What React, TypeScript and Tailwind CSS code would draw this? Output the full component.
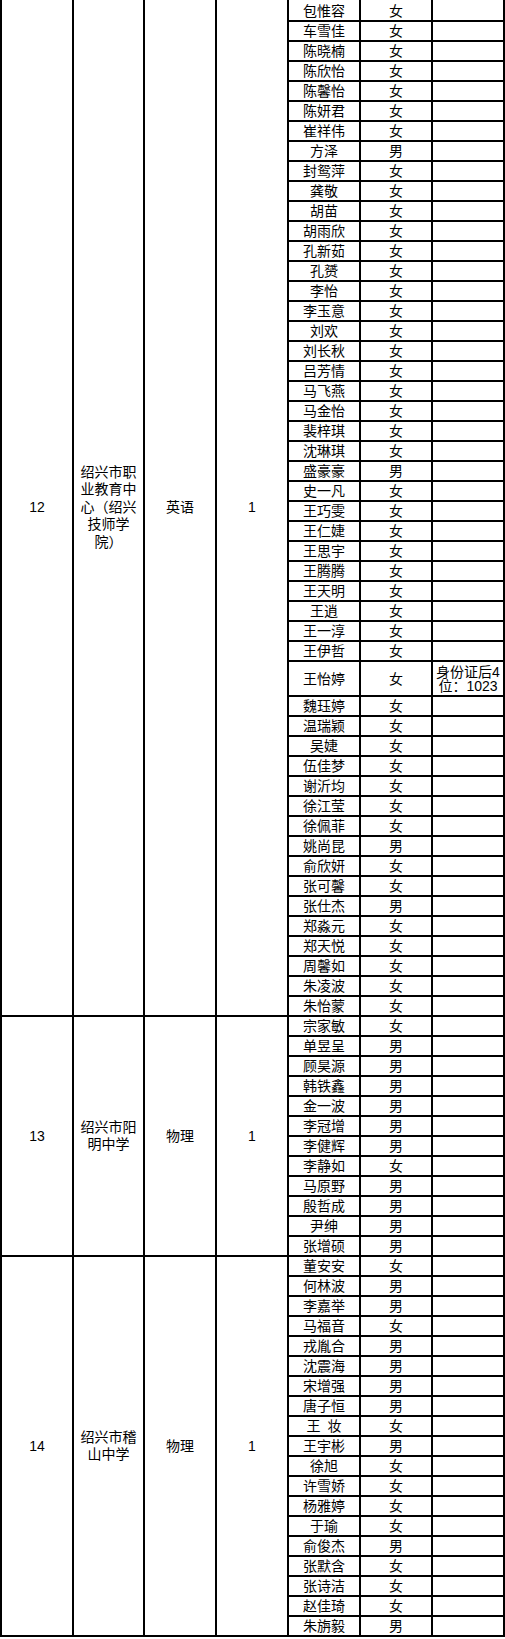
import React from "react";

type Person = {
  name: string;
  gender: "男" | "女";
  note?: string;
};

type Group = {
  no: string;
  school: string;
  subject: string;
  count: string;
  people: Person[];
};

const f = (name: string): Person => ({ name, gender: "女" });
const m = (name: string): Person => ({ name, gender: "男" });

const groups: Group[] = [
  {
    no: "12",
    school: "绍兴市职业教育中心（绍兴技师学院）",
    subject: "英语",
    count: "1",
    people: [
      f("包惟容"),
      f("车雪佳"),
      f("陈晓楠"),
      f("陈欣怡"),
      f("陈馨怡"),
      f("陈妍君"),
      f("崔祥伟"),
      m("方泽"),
      f("封鸳萍"),
      f("龚敬"),
      f("胡苗"),
      f("胡雨欣"),
      f("孔新茹"),
      f("孔赟"),
      f("李怡"),
      f("李玉意"),
      f("刘欢"),
      f("刘长秋"),
      f("吕芳情"),
      f("马飞燕"),
      f("马金怡"),
      f("裴梓琪"),
      f("沈琳琪"),
      m("盛豪豪"),
      f("史一凡"),
      f("王巧雯"),
      f("王仁婕"),
      f("王思宇"),
      f("王腾腾"),
      f("王天明"),
      f("王逍"),
      f("王一淳"),
      f("王伊哲"),
      { name: "王怡婷", gender: "女", note: "身份证后4位：1023" },
      f("魏珏婷"),
      f("温瑞颖"),
      f("吴婕"),
      f("伍佳梦"),
      f("谢沂均"),
      f("徐江莹"),
      f("徐佩菲"),
      m("姚尚昆"),
      f("俞欣妍"),
      f("张可馨"),
      m("张仕杰"),
      f("郑淼元"),
      f("郑天悦"),
      f("周馨如"),
      f("朱凌波"),
      f("朱怡蒙"),
    ],
  },
  {
    no: "13",
    school: "绍兴市阳明中学",
    subject: "物理",
    count: "1",
    people: [
      f("宗家敏"),
      m("单昱呈"),
      m("顾昊源"),
      m("韩铁鑫"),
      m("金一波"),
      m("李冠增"),
      m("李健辉"),
      f("李静如"),
      m("马原野"),
      m("殷哲成"),
      m("尹绅"),
      m("张增硕"),
    ],
  },
  {
    no: "14",
    school: "绍兴市稽山中学",
    subject: "物理",
    count: "1",
    people: [
      f("董安安"),
      m("何林波"),
      m("李嘉举"),
      f("马福音"),
      m("戎胤合"),
      m("沈震海"),
      m("宋增强"),
      m("唐子恒"),
      f("王\u2002妆"),
      m("王宇彬"),
      f("徐旭"),
      f("许雪娇"),
      f("杨雅婷"),
      f("于瑜"),
      m("俞俊杰"),
      f("张默含"),
      f("张诗洁"),
      f("赵佳琦"),
      m("朱旃毅"),
    ],
  },
];

const PersonRow = ({ person, first }: { person: Person; first: boolean }) => {
  // the note row is taller and its text sits in the middle
  if (person.note) {
    return (
      <div className="flex h-[35px] border-b-2 border-black">
        <div className="flex w-[72px] items-center justify-center border-r-2 border-black leading-[18px] whitespace-pre">
          {person.name}
        </div>
        <div className="flex w-[72px] items-center justify-center border-r-2 border-black leading-[18px]">
          {person.gender}
        </div>
        <div className="flex w-[72px] items-center justify-center border-r-2 border-black">
          <div className="w-[70px] text-center leading-[14px]">
            {person.note}
          </div>
        </div>
      </div>
    );
  }

  return (
    <div
      className={
        first
          ? "flex h-[22px] border-b-2 border-black"
          : "flex h-5 border-b-2 border-black"
      }
    >
      <div className="flex w-[72px] items-end justify-center border-r-2 border-black leading-[18px] whitespace-pre">
        {person.name}
      </div>
      <div className="flex w-[72px] items-end justify-center border-r-2 border-black leading-[18px]">
        {person.gender}
      </div>
      <div className="w-[72px] border-r-2 border-black" />
    </div>
  );
};

const GroupBlock = ({ group, gi }: { group: Group; gi: number }) => {
  return (
    <div className="flex">
      <div className="flex w-[72px] items-center justify-center border-r-2 border-b-2 border-black">
        {group.no}
      </div>
      <div className="flex w-[71px] items-center justify-center border-r-2 border-b-2 border-black">
        <div className="w-[58px] text-center leading-[17.5px]">
          {group.school}
        </div>
      </div>
      <div className="flex w-[72px] items-center justify-center border-r-2 border-b-2 border-black">
        {group.subject}
      </div>
      <div className="flex w-[72px] items-center justify-center border-r-2 border-b-2 border-black">
        {group.count}
      </div>
      <div className="flex flex-col">
        {group.people.map((p, i) => (
          <PersonRow key={p.name} person={p} first={gi === 0 && i === 0} />
        ))}
      </div>
    </div>
  );
};

export default function App() {
  return (
    <div className="h-[1639px] w-[505px] bg-white text-[14px] text-black font-['Liberation_Sans','Noto_Sans_CJK_SC',sans-serif]">
      <div className="border-l-2 border-black">
        {groups.map((g, gi) => (
          <GroupBlock key={g.no} group={g} gi={gi} />
        ))}
      </div>
    </div>
  );
}
